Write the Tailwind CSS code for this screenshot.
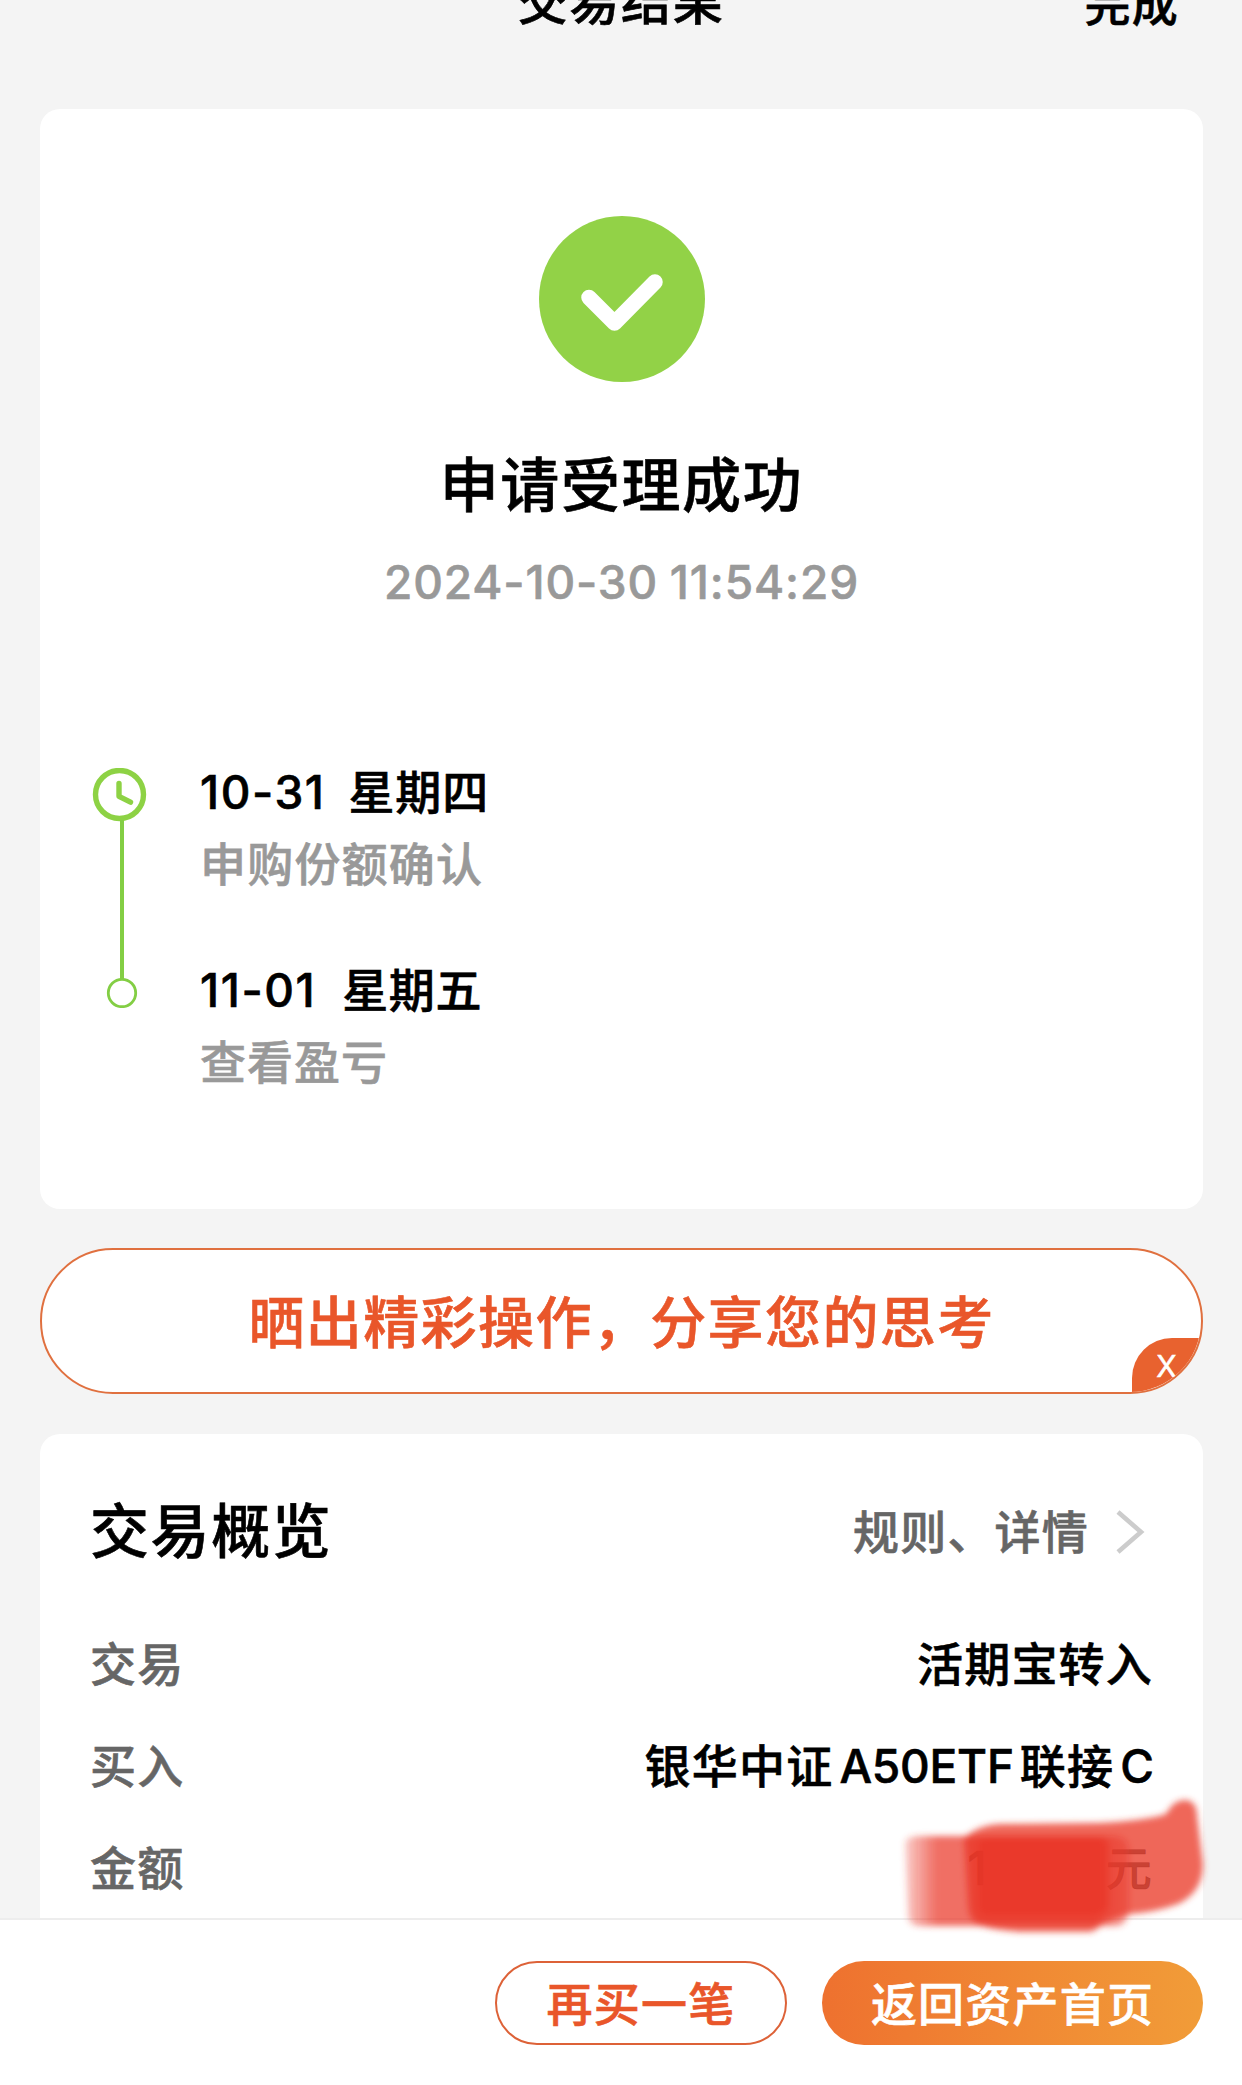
<!DOCTYPE html>
<html lang="zh-CN">
<head>
    <meta charset="UTF-8">
    <meta name="viewport" content="width=device-width, initial-scale=1.0">
    <title>交易结果</title>
    <script src="https://cdn.jsdelivr.net/npm/@tailwindcss/browser@4"></script>
</head>
<body class="bg-[#f4f4f4]">
    <div class="relative flex h-[2085px] w-[1242px] flex-col overflow-hidden font-['Inter','Noto_Sans_CJK_SC',sans-serif] text-[46px] leading-[60px] font-medium tracking-[1.2px] text-black [-webkit-text-stroke:0.6px_currentColor]">

        <!-- header, scrolled half out of view -->
        <header class="grid h-[109px] shrink-0 grid-cols-3 px-[63px]">
            <h1 class="col-start-2 -mt-[28px] text-center text-[50px] tracking-[1.8px] font-medium">交易结果</h1>
            <a class="-mt-[26px] text-right" href="#">完成</a>
        </header>

        <main class="flex h-[1809px] shrink-0 flex-col overflow-hidden pl-[40px] pr-[39px]">
            <!-- result -->
            <section class="flex h-[1100px] shrink-0 flex-col rounded-[20px] bg-white pt-[107px]">
                <svg class="mx-auto h-[166px] w-[166px]" viewBox="0 0 166 166" fill="none">
                    <circle cx="83" cy="83" r="83" fill="#92d247"/>
                    <path d="M50 81.5 75.5 107 116 66" stroke="#fff" stroke-width="15.5" stroke-linecap="round" stroke-linejoin="round"/>
                </svg>
                <h2 class="mt-[64px] text-center text-[59px] leading-[80px] tracking-[1.6px]">申请受理成功</h2>
                <p class="mt-[26px] text-center tracking-[0.9px] [word-spacing:-1.5px] text-[#999]">2024-10-30 11:54:29</p>

                <div class="mt-[150px] flex pl-[52px]">
                    <svg class="mt-[6px] h-[240px] w-[56px]" viewBox="0 0 56 240" fill="none">
                        <circle cx="27.5" cy="26.5" r="24" stroke="#8dd244" stroke-width="5.4"/>
                        <path d="M27 15.5v12.8l11.5 5.9" stroke="#8dd244" stroke-width="5.4" stroke-linecap="round" stroke-linejoin="round"/>
                        <path d="M30 52v159" stroke="#83ce44" stroke-width="4"/>
                        <circle cx="30" cy="225" r="13.7" stroke="#83ce44" stroke-width="2.8"/>
                    </svg>
                    <div class="pl-[52px]">
                        <div class="flex gap-[23px]"><span class="tracking-[1.6px]">10-31</span><span class="tracking-[0.8px]">星期四</span></div>
                        <p class="mt-[12px] text-[#999]">申购份额确认</p>
                        <div class="mt-[66px] flex gap-[26px]"><span class="tracking-[1.6px]">11-01</span><span class="tracking-[0.6px]">星期五</span></div>
                        <p class="mt-[12px] tracking-[1px] text-[#999]">查看盈亏</p>
                    </div>
                </div>
            </section>

            <!-- share banner -->
            <section class="relative mt-[39px] flex h-[146px] shrink-0 items-center justify-center overflow-hidden rounded-full border-2 border-[#e0703f] bg-white pt-[3px] text-[56px] tracking-[1.4px] text-[#e9562a]">
                晒出精彩操作，分享您的思考
                <button class="absolute right-0 bottom-0 h-[54px] w-[69px] rounded-tl-[40px] bg-[#e8622f] text-[30px] leading-[56px] font-normal tracking-normal text-white [-webkit-text-stroke:0.5px_currentColor]">X</button>
            </section>

            <!-- overview -->
            <section class="mt-[40px] h-[520px] shrink-0 rounded-t-[20px] bg-white pt-[58px] pr-[50px] pl-[50px]">
                <div class="flex h-[80px] items-center justify-between">
                    <h2 class="text-[59px] tracking-[1.6px]">交易概览</h2>
                    <a class="flex items-center text-[#666]" href="#">
                        规则、详情
                        <svg class="ml-[26px] mr-[8px] h-[46px] w-[30px]" viewBox="0 0 30 46" fill="none">
                            <path d="M3 3 26 23 3 43" stroke="#ccc" stroke-width="4.6"/>
                        </svg>
                    </a>
                </div>
                <dl class="mt-[62px] flex flex-col gap-[42px]">
                    <div class="flex justify-between">
                        <dt class="text-[#666]">交易</dt>
                        <dd>活期宝转入</dd>
                    </div>
                    <div class="flex justify-between">
                        <dt class="text-[#666]">买入</dt>
                        <dd class="flex gap-[6px]"><span>银华中证</span><span class="tracking-[-0.2px]">A50ETF</span><span>联接</span><span class="tracking-[-1px]">C</span></dd>
                    </div>
                    <div class="flex justify-between">
                        <dt class="text-[#666]">金额</dt>
                        <dd class="flex gap-[118px]"><span class="text-black/75">1</span><span class="text-black/65">元</span></dd>
                    </div>
                </dl>
            </section>
        </main>

        <!-- bottom bar -->
        <footer class="flex h-[167px] shrink-0 justify-end gap-[35px] border-t-2 border-[#ededed] bg-white pt-[41px] pr-[39px]">
            <button class="h-[84px] w-[292px] rounded-full border-2 border-[#dd6238] pt-[2px] text-[#e9562a]">再买一笔</button>
            <button class="h-[84px] w-[381px] rounded-full bg-linear-to-r from-[#ee712f] to-[#f19c38] pt-[2px] text-white">返回资产首页</button>
        </footer>

        <!-- marker strokes over the amount -->
        <svg class="absolute top-[1780px] left-[880px] h-[180px] w-[362px]" viewBox="0 0 362 180">
            <defs>
                <filter id="soft" x="-10%" y="-10%" width="120%" height="120%"><feGaussianBlur stdDeviation="3"/></filter>
                <linearGradient id="edge" x1="0" x2="1" y1="0" y2="0">
                    <stop offset="0" stop-color="#ea3829" stop-opacity=".25"/>
                    <stop offset=".14" stop-color="#ea3829" stop-opacity=".72"/>
                    <stop offset=".85" stop-color="#ea3829" stop-opacity=".72"/>
                    <stop offset="1" stop-color="#ea3829" stop-opacity=".45"/>
                </linearGradient>
            </defs>
            <g filter="url(#soft)">
                <path d="M25 62Q28 56 38 56H232Q249 56 249 70V132Q246 146 236 146H40Q30 146 28 138Z" fill="url(#edge)"/>
                <path d="M84 58Q98 45 120 44L216 43Q264 41 286 34Q294 20 304 20Q317 20 317 36L323 84Q323 112 298 124Q276 132 250 134L224 142Q216 152 208 152H140Q112 150 98 145Q88 138 88 124Z" fill="#ea3829" fill-opacity=".77"/>
                <path d="M98 62Q102 57 112 57H220Q228 58 228 66V128Q222 136 212 136H110Q98 136 98 126Z" fill="#ea3626" fill-opacity=".7"/>
            </g>
        </svg>
    </div>
</body>
</html>
